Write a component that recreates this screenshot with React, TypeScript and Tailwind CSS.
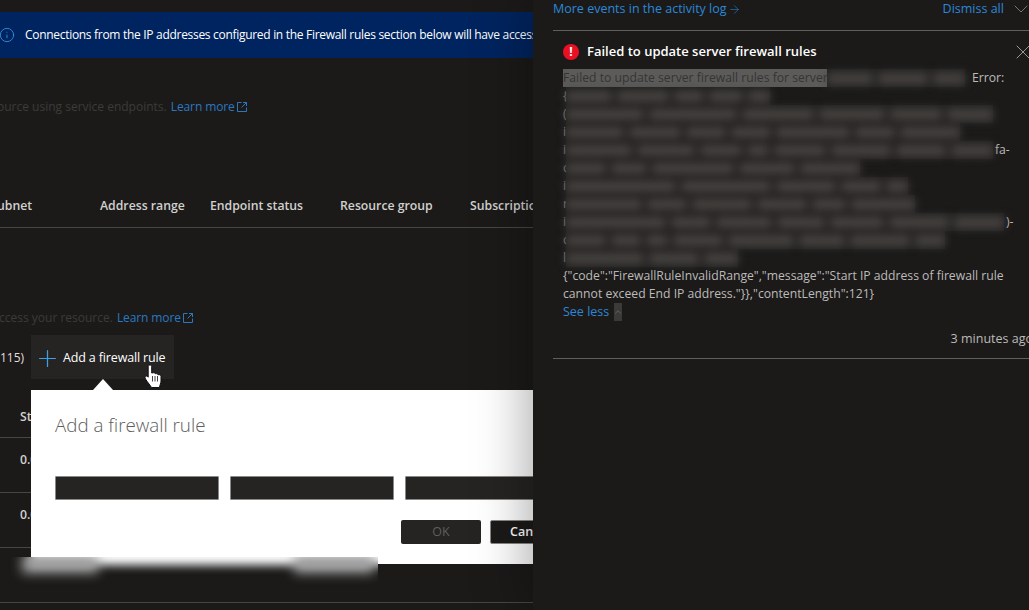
import { ArrowRight, ChevronDown, ChevronUp, Info, Plus, X } from "lucide-react";

const font = "font-['Open_Sans',sans-serif]";

function ExternalIcon() {
  return (
    <svg className="ml-[2px] inline-block" width="10" height="10" viewBox="0 0 10 10" fill="none" stroke="#2b78c2" strokeWidth="1">
      <path d="M9.5 5.5v4h-9v-9h4" />
      <path d="M6 .5h3.5V4M9.5 .5 4.5 5.5" />
    </svg>
  );
}

function HandCursor() {
  return (
    <svg className="absolute left-[144px] top-[364px] z-20" width="19" height="25" viewBox="0 0 19 25">
      <path
        d="M6 1c1 0 1.700.7 1.700 1.700V9l1.300-.2c.9-.4 1.900 0 2.200.8l.6.1c.9-.3 1.800.1 2.100.9l.6.1c1-.2 2.500.3 2.500 1.800v4.500c0 2.500-1.300 4-1.500 6.500H7.500C6.500 21.500 4 19 1.500 15c-.8-1.300-.5-2.400.3-2.800.8-.4 1.700 0 2.400 1V2.700C4.200 1.700 5 1 6 1z"
        fill="#fff"
        stroke="#111"
        strokeWidth="1"
      />
      <path d="M8.500 12v5.500M11 12v5.500M13.500 12v5.500" stroke="#111" strokeWidth=".8" />
    </svg>
  );
}

function LeftPane() {
  return (
    <div className="relative h-[610px] w-[533px] shrink-0 overflow-hidden">
      <div className="mt-3 flex h-[46px] items-center whitespace-nowrap bg-[#00245f] text-[12px] tracking-[-0.3px] text-white">
        <Info className="-ml-px mr-[10px] shrink-0 text-[#3a96dd]" size={16} strokeWidth={1.25} />
        <span>Connections from the IP addresses configured in the Firewall rules section below will have access to this resource</span>
      </div>

      <div className="mt-[40px] flex h-[18px] items-center whitespace-nowrap text-[12px]">
        <span className="-ml-[3px] text-[#3c3b3a]">ource using service endpoints.</span>
        <span className="ml-[4px] tracking-[-0.1px] text-[#2b78c2]">Learn more</span>
        <ExternalIcon />
      </div>

      <div className="mt-[80px] flex h-[32px] items-start whitespace-nowrap border-b border-[#484644] pt-[1px] text-[12.25px] font-semibold text-[#d2d0ce]">
        <div className="w-[100px] shrink-0"><span className="-ml-[3px] block">ubnet</span></div>
        <div className="w-[110px] shrink-0">Address range</div>
        <div className="w-[130px] shrink-0">Endpoint status</div>
        <div className="w-[130px] shrink-0">Resource group</div>
        <div className="shrink-0">Subscription ID</div>
      </div>

      <div className="mt-[81px] flex h-[18px] items-center whitespace-nowrap text-[12px]">
        <span className="-ml-[1px] text-[#3c3b3a]">ccess your resource.</span>
        <span className="ml-[4px] tracking-[-0.1px] text-[#2b78c2]">Learn more</span>
        <ExternalIcon />
      </div>

      <div className="mt-[8px] flex h-[44px] items-center whitespace-nowrap text-[12.5px] text-[#e1dfdd]">
        <div className="w-[31px] shrink-0 pt-[2px] text-right">
          <span className="mr-[9px] text-[12px]">115)</span>
        </div>
        <div className="flex h-[44px] w-[143px] shrink-0 items-center bg-[#252423] pl-[3px]">
          <Plus className="mr-[2px] mt-[2px] shrink-0 text-[#3f9fe6]" size={27} strokeWidth={1.1} />
          <span className="pt-[2px] tracking-[-0.15px] text-white">Add a firewall rule</span>
        </div>
      </div>

      <div className="mt-[27px] flex h-[32px] items-start border-b border-[#484644] pl-5 pt-[2px] text-[12.25px] font-semibold text-[#d2d0ce]">Start IP</div>
      <div className="h-[55px] border-b border-[#484644] pl-5 pt-[13px] text-[12.25px] font-semibold text-[#d2d0ce]">0.0.0.0</div>
      <div className="h-[55px] border-b border-[#484644] pl-5 pt-[13px] text-[12.25px] font-semibold text-[#d2d0ce]">0.0.0.0</div>
      <div className="h-[55px] border-b border-[#484644]" />

      {/* callout */}
      <div className="absolute left-[93px] top-[379px] h-0 w-0 border-x-[10px] border-b-[11px] border-x-transparent border-b-white" />
      <div className="absolute left-[31px] top-[390px] h-[174px] w-[520px] bg-white pl-[24px] pt-[21px]">
        <div className="text-[18.75px] font-light leading-[28px] text-[#605e5c]">Add a firewall rule</div>
        <div className="mt-[37px] flex gap-[11px]">
          <div className="h-[24px] w-[164px] shrink-0 rounded-[1px] border border-[#8a8886] bg-[#252423]" />
          <div className="h-[24px] w-[164px] shrink-0 rounded-[1px] border border-[#8a8886] bg-[#252423]" />
          <div className="h-[24px] w-[164px] shrink-0 rounded-[1px] border border-[#8a8886] bg-[#252423]" />
        </div>
        <div className="ml-[346px] mt-[20px] flex gap-[9px] text-[12.5px]">
          <div className="flex h-[24px] w-[80px] shrink-0 items-center justify-center rounded-[2px] bg-[#252423] text-[#605e5c]">OK</div>
          <div className="flex h-[24px] w-[80px] shrink-0 items-center justify-center rounded-[2px] border border-[#8a8886] bg-[#1b1a19] font-semibold text-white">Cancel</div>
        </div>
      </div>

      {/* blurred edge under the callout */}
      <div className="absolute left-0 top-[557px] h-[30px] w-[378px] overflow-hidden bg-[#1b1a19]">
        <div className="absolute left-[31px] top-[-10px] h-[18px] w-[370px] bg-white blur-[5px]" />
        <div className="absolute left-[22px] top-[-2px] h-[18px] w-[76px] bg-[#a0a0a0] blur-[6px]" />
        <div className="absolute left-[294px] top-[-2px] h-[18px] w-[80px] bg-[#a0a0a0] blur-[6px]" />
      </div>

      <HandCursor />
    </div>
  );
}

function BlurRow({ segments, edge, tail }: { segments: number[]; edge: string; tail?: string }) {
  return (
    <div className="flex h-[18px] items-center">
      <span className="w-[3px] shrink-0 overflow-hidden text-[#7a7876]">{edge}</span>
      <div className="flex h-[18px] shrink-0 items-center gap-[5px] bg-[#232120]">
        {segments.map((w, i) => (
          <div key={i} className="h-[11px] bg-[#474442] blur-[5px]" style={{ width: w }} />
        ))}
      </div>
      {tail && <span className="ml-[2px]">{tail}</span>}
    </div>
  );
}

const rows: { segments: number[]; edge: string; tail?: string }[] = [
  { segments: [46, 52, 30, 34, 22], edge: "{" },
  { segments: [78, 88, 72, 66, 52, 46], edge: "(" },
  { segments: [58, 52, 40, 40, 74, 40, 60], edge: "i" },
  { segments: [66, 58, 42, 22, 52, 60, 50, 42], edge: "i", tail: "fa-" },
  { segments: [40, 36, 82, 56, 60], edge: "c" },
  { segments: [110, 90, 60, 40, 22], edge: "i" },
  { segments: [76, 40, 60, 50, 34, 64], edge: "r" },
  { segments: [100, 40, 56, 48, 54, 60, 50], edge: "i", tail: ")-" },
  { segments: [40, 30, 22, 50, 66, 46, 60, 30], edge: "c" },
  { segments: [78, 50, 34], edge: "l" },
];

function NotificationPane() {
  return (
    <div className="relative z-10 h-[610px] flex-1 overflow-hidden bg-[#1b1a19] pl-5 text-[12.2px] text-[#bdbbb9] shadow-[-4px_0_50px_rgba(0,0,0,0.35)]">
      <div className="flex h-[31px] items-start whitespace-nowrap border-b border-[#605e5c] text-[12.5px] text-[#2b88d8]">
        <span>More events in the activity log</span>
        <ArrowRight className="ml-[1px] mt-[3px] shrink-0 text-[#2b78c2]" size={13} strokeWidth={1.2} />
        <span className="ml-[202px]">Dismiss all</span>
        <ChevronDown className="-mt-[3px] ml-[5px] shrink-0 text-[#a19f9d]" size={24} strokeWidth={0.7} />
      </div>

      <div className="pl-[10px]">
        <div className="mt-[12px] flex h-[18px] items-center">
          <div className="mr-2 flex size-4 shrink-0 items-center justify-center rounded-full bg-[#e81123] text-[12px] font-bold leading-none text-white">!</div>
          <span className="text-[13px] font-semibold text-white">Failed to update server firewall rules</span>
          <X className="-mr-[6px] ml-auto shrink-0 text-[#d2d0ce]" size={24} strokeWidth={0.7} />
        </div>

        <div className="mt-[8px] leading-[18px]">
          <div className="flex h-[18px] items-center whitespace-nowrap">
            <span className="w-[264px] shrink-0 overflow-hidden bg-[#5c5b5a] text-[#353433]">Failed to update server firewall rules for server</span>
            <div className="flex h-[18px] w-[138px] shrink-0 items-center gap-[5px] bg-[#232120]">
              <div className="h-[11px] w-[46px] bg-[#474442] blur-[5px]" />
              <div className="h-[11px] w-[50px] bg-[#474442] blur-[5px]" />
              <div className="h-[11px] w-[32px] bg-[#474442] blur-[5px]" />
            </div>
            <span className="ml-[7px]">Error:</span>
          </div>
          {rows.map((row, i) => (
            <BlurRow key={i} segments={row.segments} edge={row.edge} tail={row.tail} />
          ))}
          <div className="w-[446px]">{'{"code":"FirewallRuleInvalidRange","message":"Start IP address of firewall rule cannot exceed End IP address."}},"contentLength":121}'}</div>
          <div className="flex h-[18px] items-center text-[12.5px]">
            <span className="text-[#2b88d8]">See less</span>
            <div className="ml-[5px] flex h-[18px] w-[8px] items-center justify-center bg-[#3b3a39]">
              <ChevronUp className="shrink-0 text-[#6b6a69]" size={10} />
            </div>
          </div>
        </div>

        <div className="-mr-1 mt-[9px] h-[18px] whitespace-nowrap text-right text-[12.5px]">3 minutes ago</div>
      </div>
      <div className="mt-[10px] border-b border-[#605e5c]" />
    </div>
  );
}

export default function App() {
  return (
    <div className={`flex h-[610px] w-[1029px] overflow-hidden bg-[#1b1a19] ${font}`}>
      <LeftPane />
      <NotificationPane />
    </div>
  );
}
